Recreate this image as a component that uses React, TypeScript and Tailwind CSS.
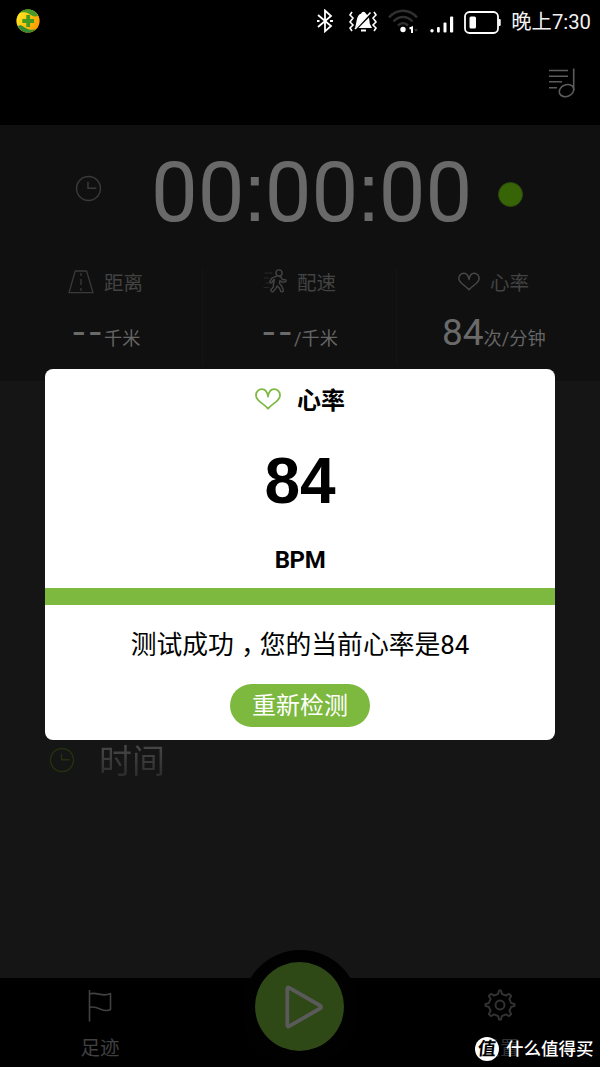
import React from 'react';

const STATS = [
  { label: '距离', value: '--', unit: '千米', icon: 'road' },
  { label: '配速', value: '--', unit: '/千米', icon: 'run' },
  { label: '心率', value: '84', unit: '次/分钟', icon: 'heart' },
];

const HeartIcon: React.FC<{ className?: string }> = ({ className }) => (
  <svg className={className} viewBox="0 0 26 22" fill="none" stroke="currentColor" strokeWidth="1.7" strokeLinejoin="round">
    <path d="M13 8.6C12.2 3.8 10 1.2 7 1.2C3.5 1.2 1 3.8 1 7.4C1 13.2 8.8 15.2 13 20.8C17.2 15.2 25 13.2 25 7.4C25 3.8 22.5 1.2 19 1.2C16 1.2 13.8 3.8 13 8.6Z" />
  </svg>
);

const ClockIcon: React.FC<{ className?: string }> = ({ className }) => (
  <svg className={className} viewBox="0 0 26 26" fill="none" stroke="currentColor" strokeWidth="1.4">
    <circle cx="13" cy="13" r="11.5" />
    <path d="M12.5 6.5V12.7H20.5" />
  </svg>
);

const StatIcon: React.FC<{ name: string }> = ({ name }) => {
  if (name === 'road') {
    return (
      <svg className="w-[26px] h-6 mr-2.5 text-[#3a3a3a]" viewBox="0 0 26 24" fill="none" stroke="currentColor" strokeWidth="1.3" strokeLinejoin="round">
        <path d="M7.2 1H18.6L25 22.6H1Z" />
        <path d="M13 3V6M13 9V15M13 18V21" />
      </svg>
    );
  }
  if (name === 'run') {
    return (
      <svg className="w-[26px] h-6 mr-2 -mt-0.5 text-[#434343]" viewBox="0 0 26 24" fill="none" stroke="currentColor" strokeWidth="1.4" strokeLinejoin="round" strokeLinecap="round">
        <circle cx="16" cy="4" r="3.1" />
        <path d="M13.5 7.3L9 8.8L6.7 12.8C7.1 14.3 8.5 14.2 9.3 13L10.5 10.8L11.5 10.6L10.5 15L10.3 18L7.7 21C8 23.2 9.7 23.2 10.7 22.2L13.3 18.6L14.1 17L16.5 19.2L17.7 22.3C19.1 23.4 20.8 22.5 20.3 20.9L18.8 17.3L16.5 14.4L16.9 11.5L19.1 13.2L22.3 12.8C23.8 11.8 23.1 10.5 21.7 10.6L19.7 10.8L17.9 8L16 7.3" />
        <path d="M2 4H10M1 9H6M3 14H6M1 18.5H6" strokeWidth="0.8" strokeDasharray="3 1" opacity="0.6" />
      </svg>
    );
  }
  return <HeartIcon className="w-[22px] h-[19px] mr-2.5 -mt-0.5 text-[#484848]" />;
};

const StatusBar: React.FC = () => (
  <div className="h-11 flex items-center pl-4 pr-[9px]">
    <svg className="w-6 h-6 -mt-0.5" viewBox="0 0 24 24">
      <defs>
        <linearGradient id="ball" x1="0" y1="0" x2="1" y2="0.6">
          <stop offset="0" stopColor="#fff326" />
          <stop offset="1" stopColor="#ff9c00" />
        </linearGradient>
      </defs>
      <circle cx="12" cy="12" r="11.6" fill="url(#ball)" />
      <path d="M3.2 4.2C8.8-1.8 18.6-.5 22.2 6.4C17.4 9.7 14.2 4.5 9.8 3.6C7.2 3.1 5 3.3 3.2 4.2Z" fill="#4b9b2a" />
      <path d="M1.8 17.2C5.3 14.5 7.8 18.9 12.2 20.2C15.5 21.2 18.4 20.6 20.5 19.8C14.8 25.8 5.6 24.5 1.8 17.2Z" fill="#368b32" />
      <path d="M10.3 6h3.8v4h4v4h-4v4h-3.8v-4h-4v-4h4z" fill="#439a20" />
    </svg>
    <div className="flex-1" />
    <svg className="w-[18px] h-6 mr-[13px] -mt-0.5" viewBox="0 0 18 24" fill="none" stroke="white" strokeWidth="1.8">
      <path d="M1 6L14 17L8 22.3V1.5L14 7L1 18" />
      <path d="M0 12H2.5M13 12H16" strokeWidth="2.2" />
    </svg>
    <svg className="w-[30px] h-6 mr-2.5" viewBox="0 0 30 24" fill="none" stroke="white" strokeWidth="1.6">
      <path d="M4 2L2 5L5 8L2 12L5 15L2 18L4 21M26 2L28 5L25 8L28 12L25 15L28 18L26 21" />
      <path d="M8 14C9 10 9 5 13 3.8C14 .9 17 .9 18 3.8L19.7 5.5L7 18ZM21 7.5L10.5 18H24L21.8 13.8Z" fill="white" stroke="none" />
      <path d="M22.5 2.5L7 19" />
      <path d="M13 20.5H18" strokeWidth="2" />
    </svg>
    <svg className="w-[31px] h-6 mr-[11px] -mt-0.5" viewBox="0 0 31 24" fill="none" stroke="#303030" strokeWidth="2.5">
      <path d="M1 8.5C9-.5 21-.5 29 8.5M5.5 12.5C11 6.5 19 6.5 24.5 12.5M10 16.5C13 13.5 17 13.5 20 16.5" />
      <circle cx="15" cy="20.5" r="2.7" fill="white" stroke="none" />
      <path d="M21.5 19.5L24 18.5V24" stroke="white" strokeWidth="2" />
      <path d="M26 20H30L28 23Z" fill="#303030" stroke="none" />
    </svg>
    <svg className="w-6 h-[18px] mr-2.5 mt-1" viewBox="0 0 24 18" fill="white">
      <circle cx="2" cy="15.7" r="1.7" />
      <rect x="7" y="12" width="2.8" height="5.5" rx="1" />
      <rect x="13.5" y="7.5" width="3" height="10" rx="1" />
      <rect x="20" y="1.5" width="3.2" height="16" rx="1" />
    </svg>
    <svg className="w-[37px] h-[23px] mr-2.5" viewBox="0 0 37 23">
      <rect x="1" y="1" width="33" height="21" rx="4.5" fill="none" stroke="white" strokeWidth="1.8" />
      <rect x="5.5" y="5.5" width="6.5" height="12" rx="1.5" fill="white" />
      <rect x="34.5" y="8" width="2.2" height="7" rx="1" fill="white" />
    </svg>
    <span className="text-[20.3px] leading-none text-[#f2f2f2] whitespace-nowrap">晚上7:30</span>
  </div>
);

// the clock digits use a colon with square dots
const Colon: React.FC = () => <span className="-mx-[1.4px] font-['Liberation_Sans',sans-serif]">:</span>;

const App: React.FC = () => {
  return (
    <div className="relative w-[600px] h-[1067px] bg-black overflow-hidden flex flex-col font-[Roboto,'Noto_Sans_CJK_SC',sans-serif]">
      <StatusBar />

      <header className="h-[81px] flex justify-end pt-6 pr-[23px]">
        <svg className="w-7 h-[31px]" viewBox="0 0 28 31" fill="none" stroke="#5c5c5c" strokeWidth="1.6">
          <path d="M0 2.5H19M0 8.3H19M0 13.8H13M0 19.8H8" />
          <path d="M24.7 .5V22" />
          <ellipse cx="17.5" cy="22.6" rx="7.5" ry="5.8" transform="rotate(-22 17.5 22.6)" />
        </svg>
      </header>

      <section className="h-64 bg-[#101010]">
        <div className="h-[136px] flex items-center pl-[75px]">
          <ClockIcon className="w-[27px] h-[27px] -mt-2.5 text-[#3a3a3a]" />
          <span className="ml-[49px] w-[322px] text-[83.2px] leading-none text-[#696969] whitespace-nowrap">00<Colon />00<Colon />00</span>
          <span className="ml-[25px] mt-0.5 w-[25px] h-[25px] rounded-full bg-[#376407] border border-[#2b4b0c]" />
        </div>
        <div className="flex h-[104px] pt-2">
          {STATS.map((s, i) => (
            <div key={s.label} className={i === 0 ? 'w-[203px] h-24 border-r border-[#151515]' : i === 1 ? 'w-[194px] h-24 border-r border-[#151515]' : 'w-[203px] h-24'}>
              <div className={i === 0 ? 'flex items-center h-[26px] pl-[68px]' : i === 1 ? 'flex items-center h-[26px] pl-[60px]' : 'flex items-center h-[26px] pl-[61px]'}>
                <StatIcon name={s.icon} />
                <span className="mt-1 text-[19.5px] leading-none text-[#434343]">{s.label}</span>
              </div>
              <div className={i === 0 ? 'flex items-baseline mt-3.5 pl-[72px] text-[#6a6a6a]' : i === 1 ? 'flex items-baseline mt-3.5 pl-[59px] text-[#6a6a6a]' : 'flex items-baseline mt-3.5 pl-[45px] text-[#6a6a6a]'}>
                {s.value === '--' ? (
                  <span className="font-['Open_Sans',sans-serif] font-medium text-[42px] leading-[40px] tracking-[3px] w-8 whitespace-nowrap">{s.value}</span>
                ) : (
                  <span className="text-[37px] leading-[48px]">{s.value}</span>
                )}
                <span className="text-[18.2px] leading-none whitespace-nowrap text-[#656565]">{s.unit}</span>
              </div>
            </div>
          ))}
        </div>
      </section>

      <main className="h-[597px] bg-[#151515] pt-[359px]">
        <div className="flex items-center h-10 pl-[49px]">
          <ClockIcon className="w-[26px] h-[26px] text-[#24320f]" />
          <span className="ml-6 mt-1 text-[33px] leading-[40px] text-transparent bg-clip-text bg-linear-to-b from-[#4a4a4a] to-[#282828]">时间</span>
        </div>
      </main>

      <footer className="relative h-[89px] bg-black flex">
        <div className="w-[200px] flex flex-col items-center pt-3">
          <svg className="w-6 h-8" viewBox="0 0 24 32" fill="none" stroke="#414141" strokeWidth="1.6" strokeLinejoin="round">
            <path d="M1.5 0V31.5M1.5 4C9 1 14 8 22.5 3.5V19.5C15 24 10 14.5 1.5 17.5" />
          </svg>
          <span className="mt-[17px] text-[19.5px] leading-none text-[#404040]">足迹</span>
        </div>
        <div className="w-[200px]" />
        <div className="w-[200px] flex flex-col items-center pt-[11px]">
          <svg className="w-8 h-8" viewBox="0 0 32 32" fill="none" stroke="#333333" strokeWidth="1.9" strokeLinejoin="round">
            <path d="M14.2 4.8L15 1.5H17L17.8 4.8L22 6.6L25 4.8L27.2 7L25.4 10L27.2 14.2L30.5 15V17L27.2 17.8L25.4 22L27.2 25L25 27.2L22 25.4L17.8 27.2L17 30.5H15L14.2 27.2L10 25.4L7 27.2L4.8 25L6.6 22L4.8 17.8L1.5 17V15L4.8 14.2L6.6 10L4.8 7L7 4.8L10 6.6Z" />
            <circle cx="16" cy="16" r="4.5" />
          </svg>
          <span className="mt-[18px] text-[19.5px] leading-none text-[#303030]">设置</span>
        </div>
        {/* play button bulges above the tab bar */}
        <div className="absolute left-[242px] -top-[28px] w-[117px] h-[117px] rounded-full bg-[#010101]" />
        <div className="absolute left-[255px] -top-4 w-[89px] h-[89px] rounded-full bg-[#2e4816] flex items-center justify-center">
          <svg className="w-10 h-11 ml-2" viewBox="0 0 40 44" fill="none" stroke="#5a5a5a" strokeWidth="3.8" strokeLinejoin="round">
            <path d="M3.3 3.8Q3.3 1.8 5.4 2.9L36 20.5Q38.2 22 36 23.5L5.4 41.1Q3.3 42.2 3.3 40.2Z" />
          </svg>
        </div>
      </footer>

      <div className="absolute left-[45px] top-[368.5px] w-[510px] h-[371px] rounded-lg bg-white text-black flex flex-col items-center overflow-hidden">
        <div className="flex items-center h-[60px] gap-4">
          <HeartIcon className="w-[26px] h-[22px] text-[#7db83f]" />
          <h2 className="mt-1 text-[24px] leading-none font-bold">心率</h2>
        </div>
        <div className="h-[104px] flex items-center font-['Liberation_Sans',sans-serif] text-[64px] leading-none font-bold">84</div>
        <div className="h-[55px] pt-[15px] text-2xl leading-none tracking-[-0.4px] font-bold">BPM</div>
        <div className="w-full h-[17px] shrink-0 bg-[#7db83f]" />
        <p className="h-[79px] pt-1 flex items-center text-[25.8px] leading-none whitespace-nowrap">
          测试成功<span className="ml-[7px] -mr-[7px]">，</span>您的当前心率是84
        </p>
        <button className="w-[140px] h-[43px] pt-0.5 rounded-full bg-[#7db83f] text-white text-2xl leading-none">重新检测</button>
      </div>

      <div className="absolute left-[475px] top-[1036px] flex items-center h-[25px]">
        <span className="w-6 h-6 rounded-full bg-white text-black text-[18px] leading-none font-bold flex items-center justify-center"><span className="-skew-x-6">值</span></span>
        <span className="ml-[7px] mt-0.5 text-[17.5px] leading-none font-medium text-white whitespace-nowrap">什么值得买</span>
      </div>
    </div>
  );
};

export default App;
